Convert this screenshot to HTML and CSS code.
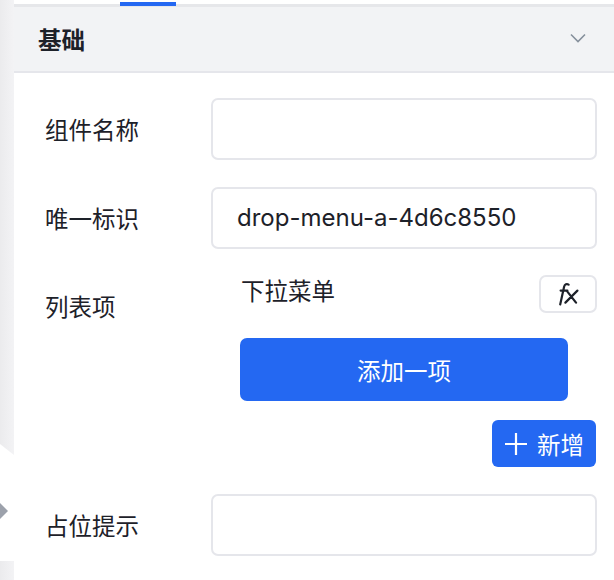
FILE: index.html
```html
<!DOCTYPE html>
<html lang="zh">
<head>
<meta charset="utf-8">
<title>基础</title>
<link rel="stylesheet" href="styles.css">
</head>
<body>
<div class="page">
  <aside class="rail">
    <div class="rail-top"></div>
    <div class="rail-notch"><span class="rail-arrow"></span></div>
    <div class="rail-bottom"></div>
  </aside>
  <main class="panel">
    <div class="tabs"><span class="tab-ind"></span></div>
    <div class="section-head">
      <span class="section-title">基础</span>
      <svg class="chev" width="16" height="10" viewBox="0 0 16 10"><path d="M1 1.5 L8 8.5 L15 1.5" fill="none" stroke="#86909c" stroke-width="1.6"/></svg>
    </div>
    <div class="form">
      <div class="row">
        <div class="label">组件名称</div>
        <div class="field"><div class="input"></div></div>
      </div>
      <div class="row">
        <div class="label">唯一标识</div>
        <div class="field"><div class="input">drop-menu-a-4d6c8550</div></div>
      </div>
      <div class="row">
        <div class="label">列表项</div>
        <div class="field list">
          <div class="list-item">
            <span class="item-name">下拉菜单</span>
            <span class="fx-btn" title="fx">
              <svg width="24" height="23" viewBox="0 0 24 23"><path d="M13.6 1.6 C11.8 0.6 9.7 1.2 9.1 3.8 L5.2 21.4 M5.6 7.6 H12.4 M11.6 7.6 L21 19.6 M22.4 7.6 L10.4 19.6" fill="none" stroke="#1d2129" stroke-width="2.2" stroke-linecap="round"/></svg>
            </span>
          </div>
          <div class="add-item">添加一项</div>
          <div class="add-row">
            <span class="new-btn">
              <svg width="24" height="24" viewBox="0 0 24 24"><path d="M12 1 V23 M1 12 H23" stroke="#fff" stroke-width="2.2" fill="none"/></svg>
              <span>新增</span>
            </span>
          </div>
        </div>
      </div>
      <div class="row">
        <div class="label">占位提示</div>
        <div class="field"><div class="input"></div></div>
      </div>
    </div>
  </main>
</div>
</body>
</html>
```
FILE: styles.css
```css
* { box-sizing: border-box; }
html, body { margin: 0; padding: 0; background: #fff; }
body {
  font-family: "Noto Sans CJK SC", "Noto Sans", sans-serif;
  color: #1d2129;
}
.page {
  display: flex;
  width: 614px;
  height: 580px;
  overflow: hidden;
}
.rail {
  width: 14px;
  flex: none;
  display: flex;
  flex-direction: column;
}
.rail-top {
  height: 455px;
  background: linear-gradient(to right, #ebebed, #f3f3f5);
  clip-path: polygon(0 0, 100% 0, 100% 100%, 0 97.6%);
}
.rail-notch {
  height: 106px;
  background: #fff;
  padding-top: 48px;
}
.rail-arrow {
  display: block;
  width: 0;
  height: 0;
  border-top: 8px solid transparent;
  border-bottom: 8px solid transparent;
  border-left: 8px solid #9ca1ab;
}
.rail-bottom {
  flex: 1;
  background: linear-gradient(to right, #ebebed, #f3f3f5);
}
.panel {
  flex: 1;
  display: flex;
  flex-direction: column;
}
.tabs {
  position: relative;
  height: 7px;
  border-bottom: 3px solid #e6e7ea;
  background: #fff;
}
.tab-ind {
  position: absolute;
  left: 106px;
  top: 2px;
  width: 56px;
  height: 4px;
  background: #2468f2;
}
.section-head {
  height: 66px;
  background: #f2f3f5;
  border-bottom: 2px solid #e5e6eb;
  display: flex;
  align-items: center;
  justify-content: space-between;
  padding: 0 28px 0 24px;
}
.section-title {
  font-size: 23.5px;
  font-weight: 700;
  color: #1d2129;
}
.chev { margin-top: -2px; }
.form {
  padding: 25px 17px 0 31px;
  display: flex;
  flex-direction: column;
  gap: 26.5px;
}
.row {
  display: flex;
  align-items: flex-start;
}
.label {
  width: 166px;
  flex: none;
  height: 62px;
  display: flex;
  align-items: center;
  font-size: 23.5px;
  color: #1d2129;
}
.field { flex: 1; }
.input {
  height: 62px;
  border: 2px solid #e5e6eb;
  border-radius: 7px;
  display: flex;
  align-items: center;
  padding-left: 24px;
  font-family: Inter, "Noto Sans", sans-serif;
  font-size: 24px;
  color: #1d2129;
}
.list { display: flex; flex-direction: column; }
.list-item {
  display: flex;
  align-items: center;
  justify-content: space-between;
  height: 38px;
  padding-left: 30px;
}
.item-name {
  font-size: 23.5px;
  margin-top: -9px;
}
.fx-btn {
  width: 58px;
  height: 38px;
  border: 2px solid #e5e6eb;
  border-radius: 7px;
  display: flex;
  align-items: center;
  justify-content: center;
}
.fx-btn svg { margin-left: -2px; margin-top: 1px; }
.add-item {
  margin: 25px 29px 0 29px;
  height: 63px;
  background: #2468f2;
  border-radius: 7px;
  color: #fff;
  font-size: 23.5px;
  display: flex;
  align-items: center;
  justify-content: center;
}
.add-row {
  display: flex;
  justify-content: flex-end;
  margin-top: 19px;
  padding-right: 1px;
}
.new-btn {
  width: 104px;
  height: 47px;
  background: #2468f2;
  border-radius: 6px;
  color: #fff;
  font-size: 23.5px;
  display: flex;
  align-items: center;
  gap: 9px;
  padding-left: 12px;
}
.new-btn svg { flex: none; }
```
